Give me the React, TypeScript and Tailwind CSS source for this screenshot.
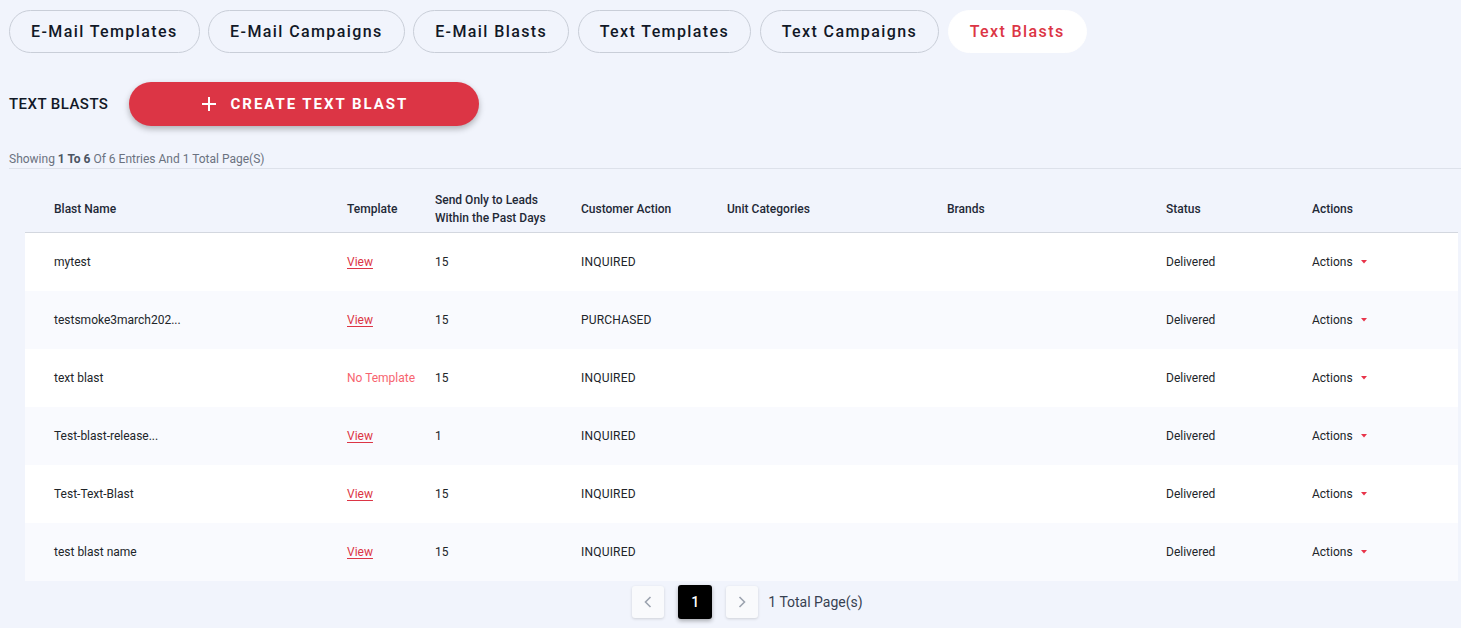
import React from "react";

const tabs = ["E-Mail Templates", "E-Mail Campaigns", "E-Mail Blasts", "Text Templates", "Text Campaigns", "Text Blasts"];

const rows = [
  { name: "mytest", tpl: "View", days: "15", action: "INQUIRED" },
  { name: "testsmoke3march202...", tpl: "View", days: "15", action: "PURCHASED" },
  { name: "text blast", tpl: "No Template", days: "15", action: "INQUIRED" },
  { name: "Test-blast-release...", tpl: "View", days: "1", action: "INQUIRED" },
  { name: "Test-Text-Blast", tpl: "View", days: "15", action: "INQUIRED" },
  { name: "test blast name", tpl: "View", days: "15", action: "INQUIRED" },
];

const cols = "grid grid-cols-[322px_88px_146px_146px_220px_219px_146px_146px]";

export default function App() {
  return (
    <div className="min-h-[628px] w-full bg-[#f1f4fc] text-[#212529] overflow-hidden" style={{ fontFamily: "Roboto, 'Noto Sans', sans-serif" }}>
      <div className="flex gap-[8.5px] pl-[9px] pt-[10px]">
        {tabs.map((t, i) => {
          const active = i === tabs.length - 1;
          return (
            <div
              key={t}
              className={
                "h-[43px] flex items-center rounded-full px-[21px] pt-[1px] text-[16px] font-medium tracking-[1.4px] " +
                (active ? "bg-white text-[#dc3545] border border-white" : "border border-[#c9ced8] text-[#111827]")
              }
            >
              {t}
            </div>
          );
        })}
      </div>

      <div className="flex items-center pl-[9px] mt-[29px]">
        <div className="text-[15px] font-medium text-[#111827] tracking-[0.45px]">TEXT BLASTS</div>
        <button className="ml-[21px] h-[44px] w-[350px] rounded-full bg-[#dc3545] text-white flex items-center justify-center shadow-[0_3px_6px_rgba(0,0,0,0.28)]">
          <svg width="16" height="16" viewBox="0 0 16 16" className="mr-[14px]">
            <path d="M8 1v14M1 8h14" stroke="white" strokeWidth="2" />
          </svg>
          <span className="text-[15px] font-bold tracking-[1.95px]">CREATE TEXT BLAST</span>
        </button>
      </div>

      <div className="pl-[9px] mt-[26px] text-[12px] text-[#6b7280] leading-[15px]">
        Showing <span className="font-bold text-[#4b5563]">1 To 6</span> Of 6 Entries And 1 Total Page(S)
      </div>
      <div className="ml-[9px] mt-[1px] h-px bg-[#dde1ea]" />

      <div className="ml-[25px] w-[1433px] mt-[17px]">
        <div className={cols + " h-[46px] items-center border-b border-[#d3d7df] text-[12px] font-medium text-[#1f2937] leading-[18px] box-content"}>
          <div className="pl-[29px]">Blast Name</div>
          <div>Template</div>
          <div>Send Only to Leads<br />Within the Past Days</div>
          <div>Customer Action</div>
          <div>Unit Categories</div>
          <div>Brands</div>
          <div>Status</div>
          <div>Actions</div>
        </div>
        {rows.map((r, i) => (
          <div key={i} className={cols + " h-[58px] items-center text-[12px] text-[#212529] " + (i % 2 === 0 ? "bg-white" : "bg-[#f9fafe]")}>
            <div className="pl-[29px]">{r.name}</div>
            <div>
              {r.tpl === "View" ? (
                <span className="text-[#dc3545] underline underline-offset-2">View</span>
              ) : (
                <span className="text-[#f7646f]">No Template</span>
              )}
            </div>
            <div>{r.days}</div>
            <div className="tracking-[0.2px]">{r.action}</div>
            <div />
            <div />
            <div>Delivered</div>
            <div className="flex items-center">
              Actions
              <svg width="6" height="4" viewBox="0 0 6 4" className="ml-[8px]">
                <path d="M0 0h6L3 3.5z" fill="#e8344a" />
              </svg>
            </div>
          </div>
        ))}
        <div className="flex items-center justify-center mt-[4px] pl-[12px]">
          <div className="flex items-center">
            <div className="w-[32px] h-[32px] rounded-[3px] bg-[#f9fafc] shadow-[0_1px_3px_rgba(0,0,0,0.15)] flex items-center justify-center">
              <svg width="8" height="12" viewBox="0 0 8 12"><path d="M6.5 1L1.5 6l5 5" stroke="#9ca3af" strokeWidth="1.6" fill="none" /></svg>
            </div>
            <div className="ml-[14px] w-[34px] h-[34px] rounded-[3px] bg-black text-white text-[14px] font-medium flex items-center justify-center shadow-[0_2px_4px_rgba(0,0,0,0.3)]">1</div>
            <div className="ml-[14px] w-[32px] h-[32px] rounded-[3px] bg-[#f9fafc] shadow-[0_1px_3px_rgba(0,0,0,0.15)] flex items-center justify-center">
              <svg width="8" height="12" viewBox="0 0 8 12"><path d="M1.5 1l5 5-5 5" stroke="#9ca3af" strokeWidth="1.6" fill="none" /></svg>
            </div>
            <div className="ml-[10px] text-[14px] text-[#374151]">1 Total Page(s)</div>
          </div>
        </div>
      </div>
    </div>
  );
}
